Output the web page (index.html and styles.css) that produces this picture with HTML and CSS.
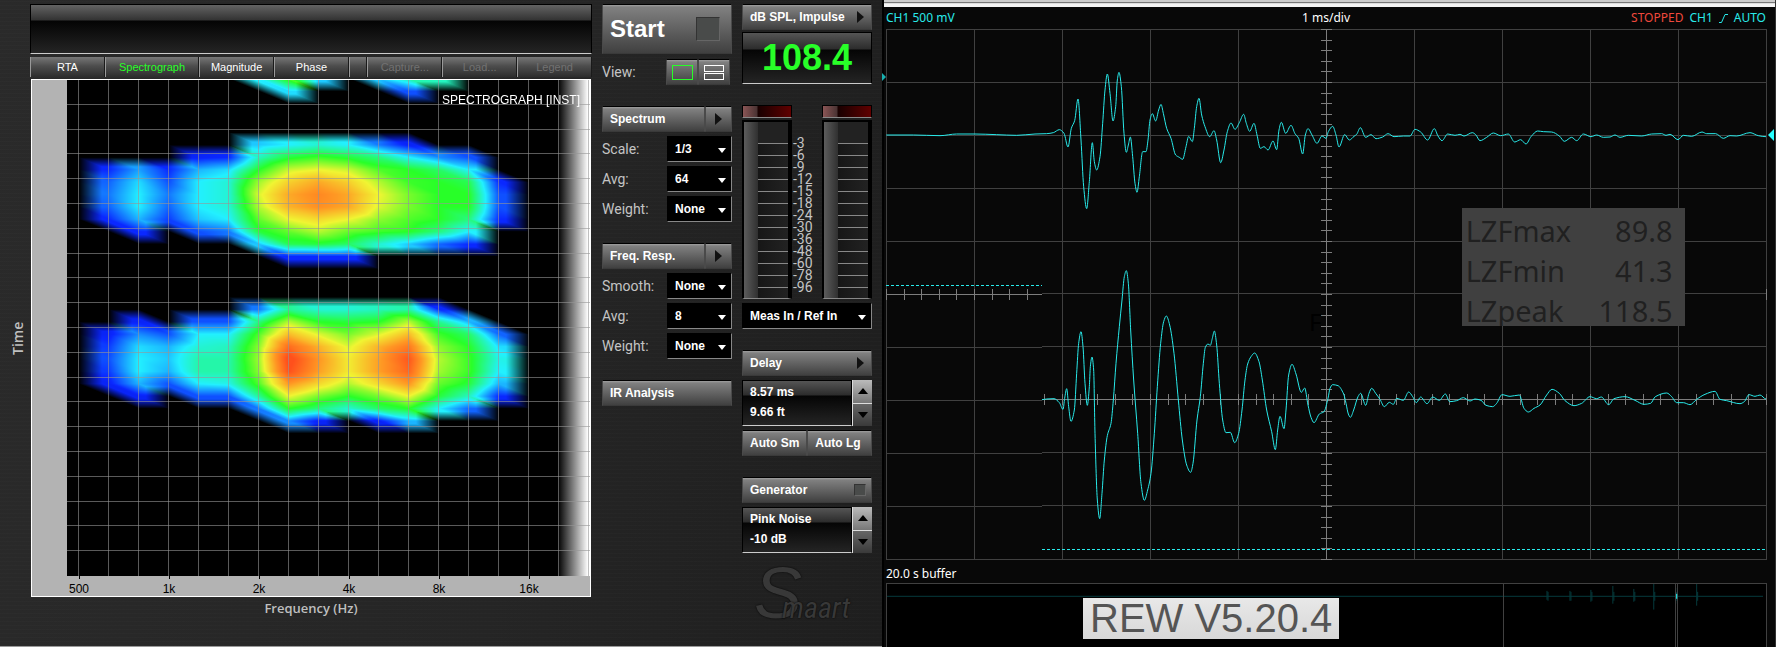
FILE: index.html
```html
<!DOCTYPE html>
<html lang="en">
<head>
<meta charset="utf-8">
<title>Spectrograph and scope</title>
<link rel="stylesheet" href="styles.css">
</head>
<body>
<main class="desk">
  <section class="smaart">
    <div class="charts">
      <div class="readout"></div>
      <nav class="tabs">
        <button class="tab">RTA</button>
        <button class="tab tab-wide tab-on">Spectrograph</button>
        <button class="tab">Magnitude</button>
        <button class="tab">Phase</button>
        <span class="tab tab-gap"></span>
        <button class="tab" disabled>Capture...</button>
        <button class="tab" disabled>Load...</button>
        <button class="tab" disabled>Legend</button>
      </nav>
      <div class="graph">
        <div class="graph-main">
          <canvas class="heat" id="heat" width="523" height="496"></canvas>
          <span class="graph-title">SPECTROGRAPH [INST]</span>
        </div>
        <div class="freqs"><span>500</span><span>1k</span><span>2k</span><span>4k</span><span>8k</span><span>16k</span></div>
        <span class="time-label">Time</span>
      </div>
      <div class="freq-label">Frequency (Hz)</div>
    </div>

    <div class="controls">
      <button class="btn start">Start<i class="lamp"></i></button>
      <div class="view">
        <span>View:</span>
        <div class="view-buttons">
          <button class="btn" aria-label="Single view"><svg width="22" height="16"><rect x="1.5" y="1.5" width="20" height="14" fill="none" stroke="#28ff28"/></svg></button>
          <button class="btn" aria-label="Split view"><svg width="22" height="16" fill="none" stroke="#fff"><rect x="1.5" y="1.5" width="19" height="6"/><rect x="1.5" y="9.5" width="19" height="6"/></svg></button>
        </div>
      </div>
      <div class="split">
        <button class="btn">Spectrum</button><button class="btn arrow" aria-label="Spectrum options"></button>
      </div>
      <div class="fields">
        <div class="field"><label for="scale">Scale:</label><div class="pick"><select id="scale"><option>1/3</option></select></div></div>
        <div class="field"><label for="avg1">Avg:</label><div class="pick"><select id="avg1"><option>64</option></select></div></div>
        <div class="field"><label for="weight1">Weight:</label><div class="pick"><select id="weight1"><option>None</option></select></div></div>
      </div>
      <div class="split">
        <button class="btn">Freq. Resp.</button><button class="btn arrow" aria-label="Frequency response options"></button>
      </div>
      <div class="fields">
        <div class="field"><label for="smooth">Smooth:</label><div class="pick"><select id="smooth"><option>None</option></select></div></div>
        <div class="field"><label for="avg2">Avg:</label><div class="pick"><select id="avg2"><option>8</option></select></div></div>
        <div class="field"><label for="weight2">Weight:</label><div class="pick"><select id="weight2"><option>None</option></select></div></div>
      </div>
      <button class="btn">IR Analysis</button>
    </div>

    <div class="meters">
      <button class="btn arrow-btn">dB SPL, Impulse</button>
      <output class="level">108.4</output>
      <div class="meter-pair">
        <div class="meter"><i class="clip"></i><i class="bar"></i></div>
        <div class="marks"><span>-3</span><span>-6</span><span>-9</span><span>-12</span><span>-15</span><span>-18</span><span>-24</span><span>-30</span><span>-36</span><span>-48</span><span>-60</span><span>-78</span><span>-96</span></div>
        <div class="meter"><i class="clip"></i><i class="bar"></i></div>
      </div>
      <div class="pick source"><select aria-label="Inputs"><option>Meas In / Ref In</option></select></div>
      <button class="btn arrow-btn">Delay</button>
      <div class="stepper">
        <div class="values"><span>8.57 ms</span><span>9.66 ft</span></div>
        <div class="steps"><button class="step up" aria-label="Increase delay"></button><button class="step down" aria-label="Decrease delay"></button></div>
      </div>
      <div class="auto"><button class="btn">Auto Sm</button><button class="btn">Auto Lg</button></div>
      <button class="btn generator">Generator<i class="lamp"></i></button>
      <div class="stepper">
        <div class="values"><span>Pink Noise</span><span>-10 dB</span></div>
        <div class="steps"><button class="step up" aria-label="Increase level"></button><button class="step down" aria-label="Decrease level"></button></div>
      </div>
      <div class="logo"><span class="logo-s">S</span><span class="logo-rest">maart</span></div>
    </div>
  </section>

  <section class="scope">
    <div class="scope-edge"></div>
    <header class="scope-head">
      <span class="cyan">CH1 500 mV</span>
      <span>1 ms/div</span>
      <span class="status"><b>STOPPED</b><span class="cyan">CH1</span><svg width="9" height="9" fill="none" stroke="#28eaea"><path d="M0 8.5H2.500L6 .5H9"/></svg><span class="cyan">AUTO</span></span>
    </header>
    <div class="plot">
      <svg class="trace" id="scope" viewBox="0 0 2643 1593" preserveAspectRatio="none"></svg>
      <i class="mark-left"></i><i class="mark-right"></i>
      <span class="ghost">F</span>
      <dl class="levels">
        <div><dt>LZFmax</dt><dd>89.8</dd></div>
        <div><dt>LZFmin</dt><dd>41.3</dd></div>
        <div><dt>LZpeak</dt><dd>118.5</dd></div>
      </dl>
    </div>
    <div class="buffer-label">20.0 s buffer</div>
    <div class="buffer">
      <svg class="buffer-trace" id="buffer" viewBox="0 0 881 64" preserveAspectRatio="none"></svg>
      <span class="version">REW V5.20.4</span>
    </div>
  </section>
</main>
<script src="plots.js"></script>
</body>
</html>
```
FILE: styles.css
```css
* { box-sizing: border-box; }
body { margin: 0; background: #000; font: bold 12px "Liberation Sans", Arial, sans-serif; color: #fff; }
button, select { font: inherit; color: inherit; margin: 0; }
.desk { display: grid; grid-template-columns: minmax(0, 882fr) minmax(0, 894fr); min-height: 100vh; }

.smaart {
  display: grid; grid-template-columns: 1fr 130px 130px; column-gap: 10px;
  padding: 4px 10px 0 30px; border-bottom: 1px solid #999;
  background: repeating-linear-gradient(0deg, rgba(255,255,255,.012) 0 1px, transparent 1px 4px), linear-gradient(100deg, #2a2a2a, #252525 60%, #1e1e1e);
}
.charts { display: flex; flex-direction: column; min-width: 0; }
.readout {
  height: 50px; border: 1px solid #000; border-bottom: 1px solid #ccc;
  background: linear-gradient(#636363, #333 15px, #040404 16px, #242424);
}
.tabs { display: flex; margin: 3px 0 2px; height: 20px; }
.tab {
  flex: 75 1 0; padding: 0; border: 0; border-left: 1px solid #999; border-right: 1px solid #1a1a1a;
  background: linear-gradient(#777, #4d4d4d 45%, #2d2d2d); font-size: 11px; font-weight: normal; line-height: 18px; color: #fff;
}
.tab-wide { flex-grow: 95; }
.tab-gap { flex-grow: 17; }
.tab-on { color: #28ff28; }
.tab:disabled { color: #717171; }
.graph { position: relative; flex: 1; display: flex; flex-direction: column; border: 1px solid #fff; background: #b3b3b3; margin: 0 1px; }
.graph-main { position: relative; flex: 1; margin-left: 35px; min-height: 200px; }
.heat { position: absolute; inset: 0; width: 100%; height: 100%; display: block; }
.graph-title { position: absolute; right: 10px; top: 12px; font-weight: normal; line-height: 16px; }
.freqs { display: flex; height: 20px; padding: 0 16px 0 2px; color: #000; font-weight: normal; }
.freqs span { flex: 1; text-align: center; line-height: 20px; padding-top: 3px; background: linear-gradient(#000, #000) 50% 0 / 1px 3px no-repeat; }
.time-label { position: absolute; left: -24px; top: 0; bottom: 0; text-align: center; writing-mode: vertical-rl; transform: rotate(180deg); font: 600 14px/20px "Open Sans", sans-serif; color: #bfbfbf; }
.freq-label { height: 49px; text-align: center; font: 600 13px/22px "Open Sans", sans-serif; color: #bfbfbf; }

.btn {
  width: 100%; height: 26px; padding: 0 7px; text-align: left; white-space: nowrap; border: 1px solid #4a4a4a; border-top-color: #000; border-bottom-color: #3a3a3a;
  background: linear-gradient(#a0a0a0, #808080 2px, #404040); color: #fff; border-radius: 0; line-height: 22px;
}
.lamp { background: #494b4a; border: 1px solid #333; border-right-color: #666; border-bottom-color: #666; }
.controls, .meters { display: flex; flex-direction: column; }
.start { height: 50px; font-size: 24px; display: flex; justify-content: space-between; align-items: center; padding-right: 11px; }
.start .lamp { width: 24px; height: 24px; }
.view { display: flex; justify-content: space-between; align-items: center; margin: 5px 2px 21px 0; }
.view span, .field label { font: 14px/20px Roboto, sans-serif; color: #c4c4c4; }
.view-buttons { display: flex; }
.view-buttons .btn { width: 32px; padding: 0 4px; }
.view-buttons svg { display: block; }
.split { display: flex; }
.split .arrow { flex: 0 0 26px; }
.arrow, .arrow-btn { display: flex; justify-content: space-between; align-items: center; }
.arrow { padding: 0 9px; }
.arrow::after, .arrow-btn::after { content: ""; border: solid transparent; border-width: 6px 0 6px 7px; border-left-color: #111; }
.fields { display: grid; gap: 4px; margin: 4px 0 21px; }
.field { display: flex; justify-content: space-between; align-items: center; }
.pick { position: relative; width: 65px; }
.pick select {
  display: block; width: 100%; height: 26px; padding: 0 7px; appearance: none; border-radius: 0;
  background: #000; color: #fff; border: 1px solid #000; border-right-color: #888; border-bottom-color: #888;
}
.pick::after { content: ""; position: absolute; right: 6px; top: 12px; border: solid transparent; border-width: 5px 4px 0; border-top-color: #fff; pointer-events: none; }

.level {
  height: 52px; margin: 2px 0 21px; text-align: center; font-size: 36px; line-height: 50px; color: #28ff28;
  border: 1px solid #000; border-bottom-color: #ccc; background: linear-gradient(#555, #2c2c2c 16px, #050505 17px, #242424);
}
.meter-pair { display: flex; justify-content: space-between; }
.meter { width: 50px; display: flex; flex-direction: column; gap: 2px; }
.clip { height: 13px; border: 1px solid #000; border-bottom-color: #888; background: linear-gradient(90deg, #8a5555, #4a3333 14px, #180000 15px, #600000); }
.bar {
  height: 179px; border: 2px solid #000; border-right-width: 4px; border-bottom: 1px solid #888;
  background:
    linear-gradient(90deg, #5c5c5c, #303030) 0 0 / 14px 100% no-repeat,
    linear-gradient(#222, #222) 14px 0 / 100% 21px no-repeat,
    repeating-linear-gradient(#888 0 1px, transparent 1px 12px) 14px 21px / 100% 100% no-repeat,
    linear-gradient(90deg, #111, #222);
}
.marks { flex: 1; padding: 32px 0 0 1px; display: flex; flex-direction: column; font: 14px/12px Roboto, sans-serif; color: #c4c4c4; }
.source { width: 100%; margin: 4px 0 21px; }
.stepper { display: flex; height: 46px; margin: 4px 0; }
.values { flex: 1; display: flex; flex-direction: column; padding: 1px 7px; line-height: 20px; border: 1px solid #000; border-bottom-color: #ccc; background: linear-gradient(#555, #2c2c2c 14px, #050505 15px, #242424); }
.steps { width: 20px; display: flex; flex-direction: column; border-left: 1px solid #ddd; }
.step { flex: 1; padding: 0; border: 0; display: flex; align-items: center; justify-content: center; background: linear-gradient(#bbb, #777); }
.step.down { background: linear-gradient(#666, #3a3a3a); border-top: 1px solid #ddd; }
.step::after { content: ""; border: solid transparent; border-width: 0 5px 6px; border-bottom-color: #000; }
.step.down::after { border-width: 6px 5px 0; border-top-color: #000; }
.auto { display: flex; margin-bottom: 21px; }
.generator { display: flex; justify-content: space-between; align-items: center; padding-right: 5px; }
.generator .lamp { width: 12px; height: 12px; }
.logo { display: flex; align-items: baseline; padding-left: 12px; color: #383838; font-style: italic; font-weight: normal; text-shadow: 0 0 2px #000; }
.logo-s { font-size: 72px; line-height: 72px; margin-right: -20px; }
.logo-rest { font: italic 30px "Roboto Condensed", "Liberation Sans Narrow", Roboto, sans-serif; }

.scope { display: flex; flex-direction: column; min-width: 0; background: #080808; border-left: 2px solid #000; border-right: 1px solid #333; font: 12px "Noto Sans", sans-serif; }
.scope-edge { height: 7px; background: linear-gradient(#ccc 2px, #777 2px 3px, #ddd 3px 4px, #f4f4f4 4px); }
.scope-head { display: grid; grid-template-columns: 1fr auto 1fr; height: 22px; line-height: 22px; padding: 0 9px 0 2px; }
.status { display: flex; align-items: center; justify-content: flex-end; gap: 6px; }
.status b { font-weight: normal; color: #f0483c; }
.cyan { color: #28eaea; }
.plot { position: relative; flex: 1; min-height: 300px; margin: 0 8px 0 2px; }
.trace, .buffer-trace { position: absolute; inset: 0; width: 100%; height: 100%; }
.trace path, .buffer-trace path { fill: none; vector-effect: non-scaling-stroke; }
.grid-line { stroke: #404040; shape-rendering: crispEdges; }
.axis-line { stroke: #7d7d7d; shape-rendering: crispEdges; }
.wave { stroke: #28eaea; }
.dash { stroke: #28eaea; stroke-dasharray: 3 2; shape-rendering: crispEdges; }
.mark-left, .mark-right { position: absolute; border: solid transparent; }
.mark-left { left: -4px; top: 44px; border-width: 4px 0 4px 4px; border-left-color: #18b0b0; }
.mark-right { right: -7px; top: 100px; border-width: 6px 6px 6px 0; border-right-color: #28ffff; }
.ghost { position: absolute; left: 48%; top: 280px; font-size: 24px; line-height: 26px; color: #000; }
.levels { position: absolute; left: 65%; top: 179px; width: 223px; height: 118px; margin: 0 0 0 3px; padding: 3px 12px 0 4px; overflow: hidden; background: #404040; color: #202020; font-size: 29px; line-height: 40px; }
.levels div { display: flex; justify-content: space-between; }
.levels dd { margin: 0; }
.buffer-label { height: 23px; line-height: 28px; padding-left: 2px; }
.buffer { position: relative; height: 64px; margin: 0 8px 0 2px; border: 1px solid #404040; border-bottom: 0; background: #000; }
.burst { stroke: #053a3c; }
.now { stroke: #28ffff; }
.version { position: absolute; left: 196px; top: 14px; padding: 0 7px; font: 40px/41px "Liberation Sans", Arial, sans-serif; color: #555; background: linear-gradient(#e8e8e8, #d8d8d8); }
```
FILE: plots.js
```js
// Spectrograph: levels per band, one list of rows for each time block.
// 0 = below threshold, 1 blue, 2 cyan, 3 green, 4 yellow, 5 orange, 6 red.
const PALETTE = [[0, 0, 160], [10, 40, 255], [34, 240, 255], [40, 255, 40], [240, 245, 50], [255, 150, 35], [255, 80, 28]];
const BAND = 30, STEP = 12.4, FIRST = 11.5;
const blocks = [
  { top: -1.7, rows: [
    [0,0,0,0,0,0,2,3.2,1.8,0,1.8,2.4,2.3,0,0,0],
    [0,0,0,0,0,0,0,1.9,0,0,0,1.2,0,0,0,0],
    []
  ]},
  { top: 52, rows: [
    [],
    [0,0,0,0,0,0,1.8,2,2.2,2,1.4,.9,0,0,0,0],
    [0,0,0,0,.9,1,2.3,2.9,3.1,2.9,2.6,2,1.5,1.2,0,0],
    [0,1,1.6,1,1.7,1.9,3,3.8,4,3.8,3.2,3,2.7,2,0,0],
    [0,1.3,1.9,1.2,2,2.2,3.6,4.4,4.8,4.4,3.7,3.1,3,2.8,1,0],
    [0,1.4,2,1.4,2,2.2,3.9,4.8,5.2,4.8,4,3.4,3,3,1.2,0],
    [0,1.3,2,1.3,2,2.2,3.7,4.7,5.1,4.8,3.9,3.4,3,3,1.2,0],
    [0,1,1.7,1.1,1.8,2,3.3,4,4.3,4,3.5,3.2,3,2.6,1,0],
    [0,0,1,0,1.2,1.4,2.9,3.3,3.7,3.3,3.1,3,2.6,2,0,0],
    [0,0,0,0,0,0,1.8,2.8,2.9,2.7,2.2,1.8,1.3,1,0,0],
    [0,0,0,0,0,0,0,1,1,1,0,0,0,0,0,0],
    []
  ]},
  { top: 216.5, rows: [
    [],
    [0,0,0,0,0,0,1.4,2.5,2.2,2.2,2.3,2.4,1,0,0,0],
    [0,0,.9,0,1.2,1.2,2.6,3.7,3,2.9,3,3.7,2.5,1.7,0,0],
    [0,.9,1.5,1.2,2,2,3.2,4.6,3.9,3.4,3.9,4.6,3.1,2.7,1.3,0],
    [0,1.1,1.9,1.7,2.2,2.3,3.5,5.6,4.7,3.9,4.7,5.4,3.5,3,1.9,0],
    [0,1.2,2,1.8,2.4,2.4,3.6,6.2,5,4.1,4.9,5.9,3.7,3.1,2.1,0],
    [0,1.1,2,1.7,2.4,2.4,3.5,6,4.9,4.1,4.9,5.7,3.6,3.1,2,0],
    [0,.9,1.7,1.2,2,2.1,3.2,5,4.3,3.7,4.3,5,3.3,2.9,1.7,0],
    [0,0,.9,0,1.2,1.2,2.5,4,3.4,3,3.4,4,2.9,2.3,1,0],
    [0,0,0,0,0,0,1.4,3,2.6,2.2,2.7,3,2,1.3,0,0],
    [0,0,0,0,0,0,0,1.5,.9,0,.9,1.7,0,0,0,0],
    []
  ]}
];

function colourOf(v) {
  const i = Math.min(5, Math.floor(v)), f = Math.min(1, v - i);
  return PALETTE[i].map((c, k) => c + (PALETTE[i + 1][k] - c) * f);
}

function drawHeat(canvas) {
  const ctx = canvas.getContext("2d"), w = canvas.width, h = canvas.height;
  const img = ctx.createImageData(w, h), d = img.data;
  for (let i = 3; i < d.length; i += 4) d[i] = 255;
  for (const { top, rows } of blocks) {
    const end = top + (rows.length - 1) * STEP;
    for (let y = Math.max(0, Math.ceil(top)); y < end; y++) {
      const r = Math.floor((y - top) / STEP), v = (y - top) / STEP - r;
      for (let x = 12; x < FIRST + 15 * BAND; x++) {
        const c = Math.floor((x - FIRST) / BAND), u = (x - FIRST) / BAND - c;
        const tl = rows[r][c] || 0, tr = rows[r][c + 1] || 0;
        const bl = rows[r + 1][c] || 0, br = rows[r + 1][c + 1] || 0;
        const parts = u > v ? [[tl, 1 - u], [tr, u - v], [br, v]] : [[tl, 1 - v], [bl, v - u], [br, u]];
        let on = 0, sum = 0;
        for (const [level, weight] of parts) if (level) { on += weight; sum += level * weight; }
        if (!on) continue;
        const rgb = colourOf(sum / on), a = Math.min(1, on * 1.3), p = (y * w + x) * 4;
        for (let k = 0; k < 3; k++) d[p + k] = rgb[k] * a;
      }
    }
  }
  ctx.putImageData(img, 0, 0);
  const fade = ctx.createLinearGradient(491, 0, 521, 0);
  fade.addColorStop(0, "rgba(255,255,255,0)");
  fade.addColorStop(1, "#fff");
  ctx.fillStyle = fade;
  ctx.fillRect(491, 0, 32, h);
  ctx.fillStyle = "rgba(150,150,150,.6)";
  for (let x = 11; x < w; x += BAND) ctx.fillRect(x, 0, 1, h);
  for (let k = 1; k < 20; k++) ctx.fillRect(0, Math.round(k * 24.8 - 1), w, 1);
}

// Scope: 264 units for each time division, 159 for each voltage division.
const upper = [19,405,100,405,180,407,230,402,285,402,350,404,410,406,465,402,500,401,520,398,538,389,552,400,564,441,574,385,584,362,594,297,603,420,611,560,620,626,628,545,637,428,643,485,650,510,660,470,668,370,675,270,682,222,690,280,699,363,707,320,712,240,717,217,724,260,732,400,739,457,745,435,751,411,758,470,765,550,771,577,778,530,788,455,798,455,804,420,810,360,817,341,827,363,836,330,843,313,850,340,860,385,873,415,887,465,898,472,908,478,918,440,926,409,937,425,943,385,950,320,957,295,965,345,975,380,989,410,1002,392,1010,420,1022,488,1032,450,1042,395,1053,369,1065,388,1078,368,1091,343,1099,370,1109,394,1122,370,1131,405,1141,445,1152,440,1164,450,1179,423,1190,449,1197,390,1204,367,1217,400,1233,376,1245,401,1256,415,1268,462,1276,405,1284,386,1296,405,1311,430,1326,408,1338,415,1345,395,1358,379,1368,405,1377,441,1394,404,1408,420,1422,409,1430,403,1441,383,1457,412,1473,404,1488,416,1508,411,1524,401,1542,410,1570,408,1590,408,1605,388,1622,396,1643,420,1663,386,1674,408,1686,422,1703,402,1725,406,1740,403,1752,408,1777,398,1787,404,1800,422,1820,412,1840,399,1862,407,1885,402,1904,426,1922,419,1938,432,1953,410,1973,393,1990,395,2015,396,2038,408,2053,424,2075,412,2090,422,2110,402,2133,410,2150,405,2170,412,2190,411,2205,405,2220,412,2245,406,2285,408,2315,402,2345,401,2358,406,2370,403,2394,419,2410,406,2435,409,2466,396,2480,401,2507,401,2530,415,2550,407,2570,408,2610,398,2635,407,2658,410];
const lower = [486,329,500,327,522,326,538,338,549,358,554,325,560,296,566,350,573,394,583,360,590,250,596,160,603,125,609,170,615,280,622,346,628,290,631,230,636,201,641,240,645,430,652,630,659,686,666,610,673,510,682,437,693,400,700,330,708,220,718,110,726,30,733,-40,739,-58,745,-20,752,120,761,270,773,430,783,580,793,631,803,600,813,550,823,430,832,290,842,160,851,95,859,78,869,105,882,190,895,330,907,450,920,525,932,547,939,520,951,390,961,320,970,220,976,172,984,162,991,166,997,145,1003,123,1010,165,1018,280,1028,390,1038,428,1051,427,1064,458,1076,430,1086,360,1095,270,1103,222,1113,200,1124,189,1137,215,1147,270,1160,360,1175,425,1186,479,1193,420,1200,379,1212,416,1218,360,1226,255,1236,223,1248,252,1264,307,1274,294,1284,345,1293,382,1302,398,1318,372,1332,365,1344,325,1350,295,1358,284,1374,287,1391,312,1398,340,1405,372,1411,382,1421,360,1434,320,1442,310,1457,346,1467,310,1475,295,1487,310,1500,328,1513,350,1528,337,1540,343,1550,325,1570,331,1586,306,1598,320,1609,338,1622,321,1641,341,1658,321,1678,331,1696,312,1709,335,1730,332,1750,323,1770,333,1785,327,1803,331,1818,346,1838,350,1850,340,1866,314,1890,319,1918,315,1932,355,1945,366,1962,355,1980,345,2000,315,2016,298,2038,310,2055,332,2082,347,2105,340,2130,320,2150,326,2164,321,2186,344,2202,326,2235,320,2265,331,2292,343,2312,340,2326,320,2360,309,2375,320,2390,338,2410,338,2430,344,2450,328,2475,313,2505,304,2520,328,2540,332,2580,341,2593,335,2607,314,2625,319,2640,315,2658,327];

// Monotone cubic through the samples, so peaks stay where they are.
function smooth(flat, dx, dy) {
  const p = [];
  for (let i = 0; i < flat.length; i += 2) p.push([flat[i] + dx, flat[i + 1] + dy]);
  const slope = p.slice(1).map((q, i) => (q[1] - p[i][1]) / (q[0] - p[i][0]));
  const tan = p.map((_, i) => {
    const a = slope[i - 1], b = slope[i];
    return a * b > 0 ? 2 * a * b / (a + b) : 0;
  });
  let path = "M" + p[0];
  for (let i = 1; i < p.length; i++) {
    const s = (p[i][0] - p[i - 1][0]) / 3;
    path += "C" + [p[i - 1][0] + s, p[i - 1][1] + tan[i - 1] * s, p[i][0] - s, p[i][1] - tan[i] * s, ...p[i]].map(n => n.toFixed(1));
  }
  return path;
}

const line = (cls, d) => `<path class="${cls}" d="${d}"/>`;

function drawScope(svg) {
  let grid = "", axis = "M1321.500 0V1593";
  const split = 468;
  for (let i = 0; i <= 10; i++) grid += `M${1.5 + i * 264} 0V1593`;
  for (let i = 0; i <= 10; i++) {
    const y = i * 159 + 1.5;
    if (i < 5) grid += `M0 ${y}H2643`;
    else if (i < 10) grid += `M0 ${y}H${split}M${split} ${y - 3}H2643`;
    else grid += "M0 1591.5H2643";
  }
  for (let y = 1.5; y < 1593; y += 31.8) axis += `M1306 ${y}H1338`;
  axis += `M0 796.5H${split}M${split} 1111.500H2643`;
  for (let x = 1.5; x < 2643; x += 52.8) {
    const y = x < split ? 780 : 1095;
    axis += `M${x} ${y}V${y + 33}`;
  }
  axis += "M2641.500 780V813";
  svg.innerHTML = line("grid-line", grid) + line("axis-line", axis) +
    line("dash", `M0 769.500H${split}`) + line("dash", `M${split} 1561.500H2640`) +
    line("wave", smooth(upper, -18, -87)) + line("wave", smooth(lower, -18, 783));
}

function drawBuffer(svg) {
  const bursts = [[661, 7, 16], [684, 7, 17], [705, 6, 18], [727, 2, 20], [748, 5, 18], [768, 0, 26], [790, 4, 20], [811, 0, 22]];
  svg.innerHTML = line("burst", "M0 12.500H878") +
    bursts.map(([x, a, b]) => line("burst", `M${x + .5} ${a}V${b}M${x + 1.5} 8V17`)).join("") +
    line("grid-line", "M617.500 0V64M790.500 0V64M792.500 0V64") + line("now", "M791.500 10V15");
}

drawHeat(document.getElementById("heat"));
drawScope(document.getElementById("scope"));
drawBuffer(document.getElementById("buffer"));
```
